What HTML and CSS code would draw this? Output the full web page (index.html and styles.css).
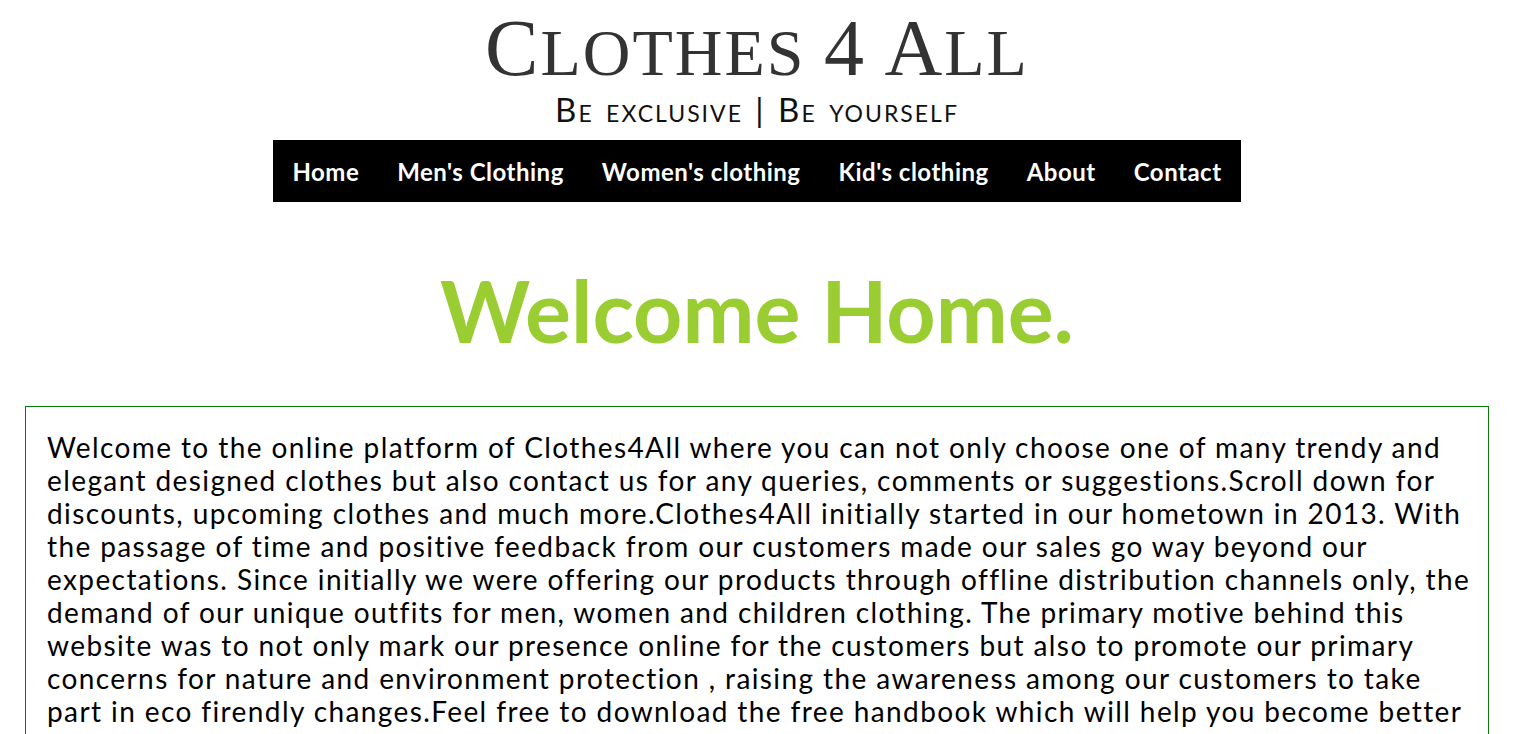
FILE: index.html
```html
<!DOCTYPE html>
<html lang="en">
<head>
<meta charset="utf-8">
<title>Clothes 4 All</title>
<link rel="stylesheet" href="styles.css">
</head>
<body>
<header class="site-header">
  <h1 class="brand"><span class="cap">C</span>lothes <span class="cap">4</span> <span class="cap">A</span>ll</h1>
  <p class="tagline">Be exclusive | Be yourself</p>
  <nav class="main-nav">
    <a href="#" class="nav-link">Home</a>
    <a href="#" class="nav-link">Men's Clothing</a>
    <a href="#" class="nav-link">Women's clothing</a>
    <a href="#" class="nav-link">Kid's clothing</a>
    <a href="#" class="nav-link">About</a>
    <a href="#" class="nav-link">Contact</a>
  </nav>
</header>
<main>
  <h2 class="welcome">Welcome Home.</h2>
  <section class="intro">
    <p>Welcome to the online platform of Clothes4All where you can not only choose one of many trendy and elegant designed clothes but also contact us for any queries, comments or suggestions.Scroll down for discounts, upcoming clothes and much more.Clothes4All initially started in our hometown in 2013. With the passage of time and positive feedback from our customers made our sales go way beyond our expectations. Since initially we were offering our products through offline distribution channels only, the demand of our unique outfits for men, women and children clothing. The primary motive behind this website was to not only mark our presence online for the customers but also to promote our primary concerns for nature and environment protection , raising the awareness among our customers to take part in eco firendly changes.Feel free to download the free handbook which will help you become better owners of nature. Download our <a href="#" class="link">free handbook</a> for the convenience of our customers and the planet.</p>
  </section>
</main>
</body>
</html>
```
FILE: styles.css
```css
html, body {
  background: #fff;
}
body {
  margin: 0 32px 0 8px;
  font-family: Lato, "Noto Sans", sans-serif;
  color: #111;
}
.site-header {
  display: flex;
  flex-direction: column;
  align-items: center;
}
.brand {
  margin: 12px 0 0;
  font-family: "Liberation Serif", serif;
  font-weight: normal;
  font-size: 66px;
  line-height: 72px;
  text-transform: uppercase;
  color: #333;
  letter-spacing: 2px;
}
.brand .cap {
  font-size: 80px;
}
.tagline {
  margin: 0;
  font-size: 33px;
  line-height: 40px;
  font-variant: small-caps;
  letter-spacing: 2px;
  word-spacing: 2px;
  color: #111;
}
.main-nav {
  margin-top: 11px;
  display: flex;
  background: #000;
  height: 62px;
  align-items: center;
}
.nav-link {
  padding: 0 19px;
  color: #fff;
  text-decoration: none;
  font-size: 24px;
  font-weight: 700;
  letter-spacing: 0.5px;
}
.welcome {
  margin: 58px 0 0;
  text-align: center;
  font-size: 86px;
  line-height: 100px;
  font-weight: 700;
  color: #9acd32;
}
.intro {
  margin: 46px 17px 0;
  border: 1px solid #0a7a0a;
  padding: 24px 13px 20px 21px;
}
.intro p {
  margin: 0;
  font-size: 28px;
  line-height: 33px;
  letter-spacing: 1.4px;
  color: #000;
}
.link {
  color: #1a5fb4;
  text-decoration: none;
}
```
